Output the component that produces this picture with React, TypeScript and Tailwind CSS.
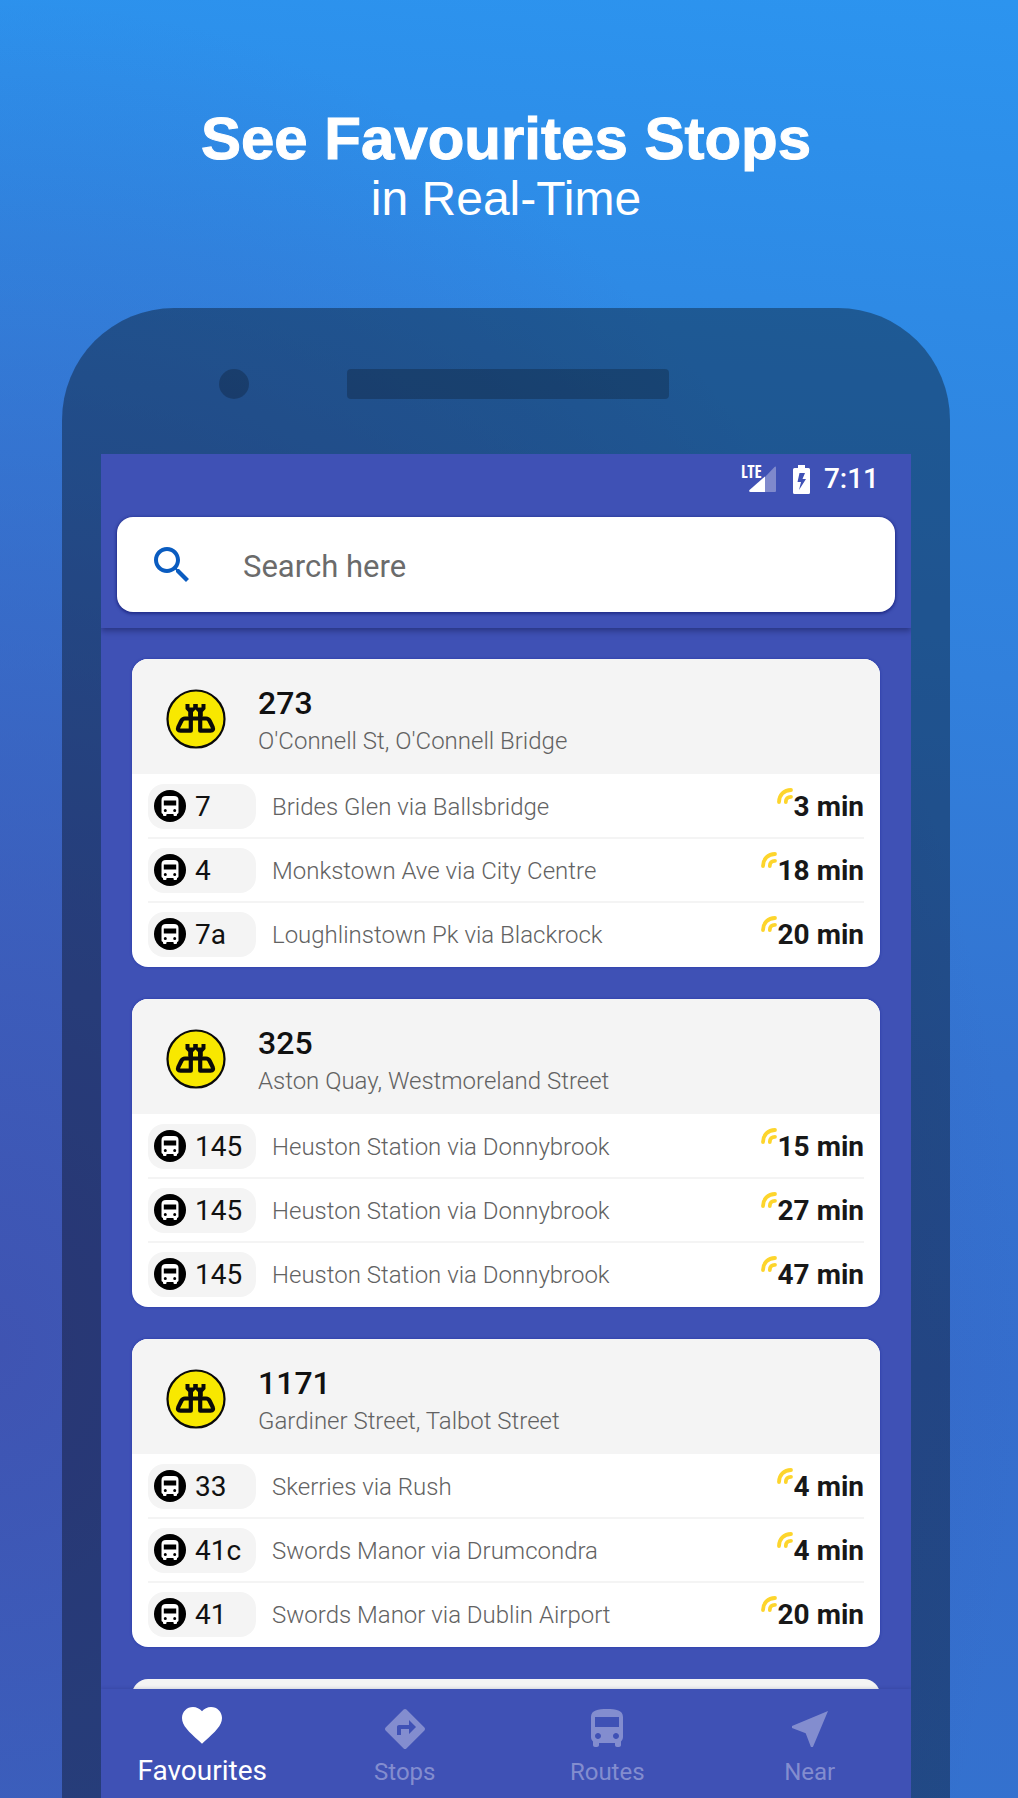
import React from "react";

type Departure = { route: string; to: string; mins: number };
type Stop = { id: string; name: string; departures: Departure[] };

const stops: Stop[] = [
  {
    id: "273",
    name: "O'Connell St, O'Connell Bridge",
    departures: [
      { route: "7", to: "Brides Glen via Ballsbridge", mins: 3 },
      { route: "4", to: "Monkstown Ave via City Centre", mins: 18 },
      { route: "7a", to: "Loughlinstown Pk via Blackrock", mins: 20 },
    ],
  },
  {
    id: "325",
    name: "Aston Quay, Westmoreland Street",
    departures: [
      { route: "145", to: "Heuston Station via Donnybrook", mins: 15 },
      { route: "145", to: "Heuston Station via Donnybrook", mins: 27 },
      { route: "145", to: "Heuston Station via Donnybrook", mins: 47 },
    ],
  },
  {
    id: "1171",
    name: "Gardiner Street, Talbot Street",
    departures: [
      { route: "33", to: "Skerries via Rush", mins: 4 },
      { route: "41c", to: "Swords Manor via Drumcondra", mins: 4 },
      { route: "41", to: "Swords Manor via Dublin Airport", mins: 20 },
    ],
  },
];

const BUS_PATH =
  "M4 16c0 .88.39 1.67 1 2.22V20c0 .55.45 1 1 1h1c.55 0 1-.45 1-1v-1h8v1c0 .55.45 1 1 1h1c.55 0 1-.45 1-1v-1.78c.61-.55 1-1.34 1-2.22V6c0-3.5-3.58-4-8-4s-8 .5-8 4v10zm3.5 1c-.83 0-1.5-.67-1.5-1.5S6.67 14 7.5 14s1.5.67 1.5 1.5S8.33 17 7.5 17zm9 0c-.83 0-1.5-.67-1.5-1.5s.67-1.5 1.5-1.5 1.5.67 1.5 1.5-.67 1.5-1.5 1.5zm1.5-6H6V6h12v5z";

function StopLogo() {
  return (
    <svg viewBox="0 0 60 60" className="size-[60px] shrink-0" aria-hidden="true">
      <circle cx="30" cy="30" r="28.5" fill="#f8e800" stroke="#0a0a0a" strokeWidth="2.2" />
      <path
        d="M19.5 15h4v3.500h3.700V15h4.600v3.500h3.700V15h4v5l-2.800 3v4.500H32V23l-2.500-2.500L27 23v4.500h-4.700V23l-2.800-3z"
        fill="#0a0a0a"
      />
      <g fill="none" stroke="#0a0a0a" strokeWidth="4.200" strokeLinejoin="round">
        <path d="M24.800 23v18.700H14.500c-2.400 0-3-1.600-2.200-3.500l3-6.200c.8-1.700 2-2.500 3.700-2.500h21c1.700 0 2.900.8 3.700 2.500l3 6.200c.8 1.900.2 3.500-2.200 3.500H34.200V23" />
      </g>
    </svg>
  );
}

function RouteIcon() {
  return (
    <svg viewBox="0 0 32 32" className="size-8 shrink-0" aria-hidden="true">
      <circle cx="16" cy="16" r="16" fill="#000" />
      <path
        fillRule="evenodd"
        fill="#fff"
        d="M12 6h8q4.500 0 4.500 4v12.500q0 1-1.500 1.500v1q0 1-1 1h-1.500q-1 0-1-1v-1h-7v1q0 1-1 1H10q-1 0-1-1v-1q-1.500-.5-1.500-1.500V10q0-4 4.500-4zM9.800 10.500v5h12.400v-5zM11.300 18.900a1.500 1.500 0 1 0 0 3 1.500 1.500 0 0 0 0-3zM20.700 18.900a1.500 1.500 0 1 0 0 3 1.500 1.500 0 0 0 0-3z"
      />
    </svg>
  );
}

function LiveIcon() {
  return (
    <svg
      viewBox="0 0 16 16"
      className="mt-[13px] mr-px size-4 shrink-0"
      fill="none"
      stroke="#fdd52c"
      strokeWidth="3.8"
      strokeLinecap="round"
      aria-hidden="true"
    >
      <path d="M2 14C2 7 7 2 14 2" />
      <path d="M8.800 14c0-3.200 2-5.200 5.200-5.200" />
    </svg>
  );
}

function StopCard({ stop }: { stop: Stop }) {
  return (
    <article className="overflow-hidden rounded-2xl bg-white shadow-[0_0_2px_1px_rgba(30,45,160,0.35)]">
      <header className="flex h-[115px] items-center bg-[#f4f4f4] pt-1 pl-[34px]">
        <StopLogo />
        <div className="ml-8 pt-[7px]">
          <h2 className="text-[32px] leading-[38px] font-medium text-[#111]">{stop.id}</h2>
          <p className="text-2xl leading-[38px] font-light text-[#626262]">{stop.name}</p>
        </div>
      </header>
      <ul className="px-4 pt-px">
        {stop.departures.map((d, i) => (
          <li key={i} className="flex h-16 items-center border-b-2 border-[#f4f4f4] last:border-transparent">
            <span className="flex h-[45px] w-[108px] shrink-0 items-center gap-[9px] rounded-2xl bg-[#f4f4f4] pl-1.5 text-[28px] text-[#111]">
              <RouteIcon />
              <span className="pt-0.5">{d.route}</span>
            </span>
            <span className="ml-4 flex-1 truncate pt-0.5 text-2xl font-light text-[#626262]">{d.to}</span>
            <span className="flex self-stretch">
              <LiveIcon />
              <span className="self-center pt-0.5 text-[28px] font-bold text-[#181818]">{d.mins} min</span>
            </span>
          </li>
        ))}
      </ul>
    </article>
  );
}

function StatusBar() {
  return (
    <div className="flex h-[50px] items-center justify-end pr-4 text-white">
      <div className="relative h-[30px] w-9">
        <svg viewBox="0 0 36 30" className="h-[30px] w-9" aria-hidden="true">
          <path d="M35 3.500V27q0 1-1 1H24V13L33.500 3q1.500-1 1.500.5z" fill="#7f89cc" />
          <path d="M24 12.500V28H9.500q-2-.5-1-2z" fill="#fff" />
        </svg>
        <span className="absolute top-0 left-0 font-['Open_Sans_Condensed','Roboto_Condensed','Roboto'] text-[17px] leading-4 font-bold">
          LTE
        </span>
      </div>
      <svg viewBox="0 0 17 29" className="ml-4 h-[29px] w-[17px]" aria-hidden="true">
        <path
          fillRule="evenodd"
          d="M5 0h7v3h3.500Q17 3 17 4.500v23Q17 29 15.500 29h-14Q0 29 0 27.500v-23Q0 3 1.500 3H5zM6.500 8L4.500 17H8L6 25l7-11H9.500L12 8z"
          fill="#fff"
        />
      </svg>
      <time className="ml-[14px] text-[28px] font-medium">7:11</time>
    </div>
  );
}

const tabs = [
  {
    label: "Stops",
    path: "M21.710 11.290l-9-9c-.39-.39-1.020-.39-1.410 0l-9 9c-.39.39-.39 1.020 0 1.410l9 9c.39.39 1.020.39 1.410 0l9-9c.39-.38.39-1.010 0-1.410zM14 14.500V12h-4v3H8v-4c0-.55.45-1 1-1h5V7.500l3.500 3.500-3.500 3.500z",
  },
  { label: "Routes", path: BUS_PATH },
  { label: "Near", path: "M21 3L3 10.530v.98l6.840 2.650L12.480 21h.98L21 3z" },
];

export default function App() {
  return (
    <main className="flex h-screen flex-col overflow-hidden bg-[radial-gradient(100%_75%_at_0%_75%,#3f54b2,#3f54b200),linear-gradient(185deg,#2c94ef_0%,#2e8ae5_17%,#3180dc_36%,#3473d0_57%,#356dcc_73%,#3472cf_100%)] font-['Roboto',sans-serif]">
      <div className="pt-[105px] pr-[6px] text-center font-['Liberation_Sans',Arial,sans-serif] text-white">
        <h1 className="text-6xl leading-[68px] font-bold [-webkit-text-stroke:1px_white]">See Favourites Stops</h1>
        <p className="text-5xl leading-[52px]">in Real-Time</p>
      </div>

      <div className="mt-[83px] mr-[68px] ml-[62px] flex min-h-0 flex-1 flex-col rounded-t-[112px] bg-black/35 px-[39px]">
        <div className="relative flex h-[146px] shrink-0 items-center justify-center pt-1.5 pl-1">
          <span className="absolute left-[118px] size-[30px] rounded-full bg-black/22" />
          <span className="h-[30px] w-2/5 rounded bg-black/22" />
        </div>

        <div className="flex min-h-0 flex-1 flex-col overflow-hidden bg-[#3f51b5]">
          <header className="z-10 shrink-0 px-4 pb-4 shadow-[0_3px_6px_rgba(20,25,80,0.5)]">
            <StatusBar />
            <label className="mt-[13px] flex h-[95px] items-center rounded-2xl bg-white pl-[37px] shadow-[0_1px_3px_1px_rgba(20,30,120,0.7)]">
              <svg viewBox="3 3 17.500 17.500" className="size-[35px] shrink-0" fill="#0a5cc0" role="img" aria-label="Search">
                <path d="M15.500 14h-.79l-.28-.27C15.410 12.590 16 11.110 16 9.500 16 5.910 13.090 3 9.500 3S3 5.910 3 9.500 5.910 16 9.500 16c1.610 0 3.090-.59 4.230-1.570l.27.28v.79l5 4.990L20.490 19l-4.990-5zm-6 0C7.010 14 5 11.990 5 9.500S7.010 5 9.500 5 14 7.010 14 9.500 11.990 14 9.500 14z" />
              </svg>
              <input
                type="text"
                placeholder="Search here"
                className="ml-[54px] min-w-0 flex-1 bg-transparent pt-1.5 text-[31px] text-[#666] outline-none placeholder:text-[#6b6b6b]"
              />
            </label>
          </header>

          <section className="flex min-h-0 flex-1 flex-col gap-8 overflow-hidden px-[31px] pt-[31px]">
            {stops.map((s) => (
              <div key={s.id} className="shrink-0">
                <StopCard stop={s} />
              </div>
            ))}
            <div className="h-16 shrink-0 rounded-t-2xl bg-[#f4f4f4]" />
          </section>

          <nav className="z-10 grid h-[109px] shrink-0 grid-cols-4 bg-[#3f51b5] shadow-[0_-1px_3px_rgba(20,25,80,0.15)]">
            <button type="button" className="flex flex-col items-center pt-3 text-white">
              <svg viewBox="0 0 24 24" className="size-12" fill="currentColor" aria-hidden="true">
                <path d="M12 21.350l-1.450-1.320C5.400 15.360 2 12.280 2 8.500 2 5.420 4.420 3 7.500 3c1.740 0 3.410.81 4.500 2.090C13.090 3.810 14.760 3 16.500 3 19.580 3 22 5.420 22 8.500c0 3.780-3.400 6.860-8.550 11.540L12 21.350z" />
              </svg>
              <span className="mt-1 text-[28px] leading-9">Favourites</span>
            </button>
            {tabs.map((t) => (
              <button key={t.label} type="button" className="flex flex-col items-center pt-4 text-[#838dcf]">
                <svg viewBox="0 0 24 24" className="size-12" fill="currentColor" aria-hidden="true">
                  <path d={t.path} />
                </svg>
                <span className="mt-[3px] text-2xl leading-8">{t.label}</span>
              </button>
            ))}
          </nav>
        </div>
      </div>
    </main>
  );
}
